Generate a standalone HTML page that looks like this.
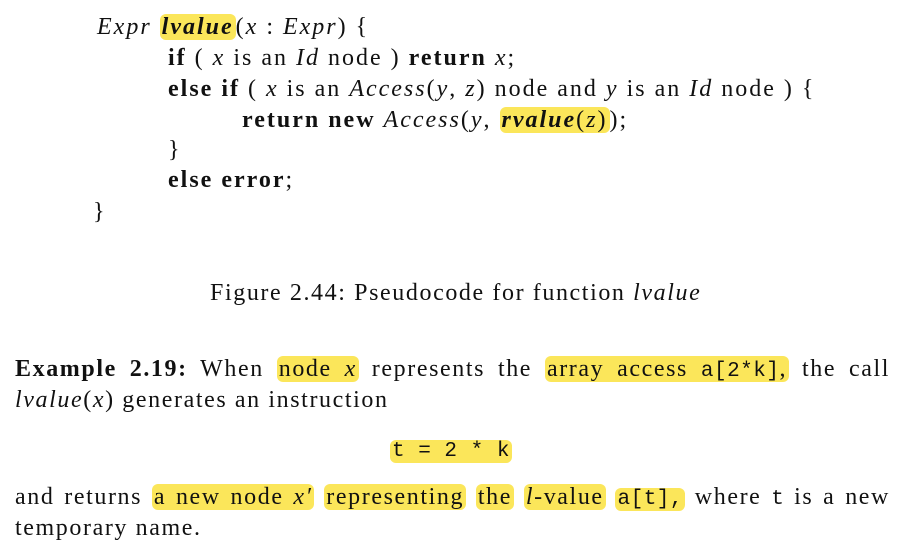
<!DOCTYPE html>
<html><head><meta charset="utf-8"><style>
body{margin:0;width:912px;height:542px;background:#fff;position:relative;overflow:hidden;font-family:"Liberation Serif","DejaVu Serif",serif;color:#111;font-size:24px;letter-spacing:1.6px}
.l{position:absolute;white-space:nowrap;line-height:30px;height:30px}
.c{letter-spacing:2px}
.h{background:#fbe65a;border-radius:6px;padding:0 2px}
.j{left:15px;width:875px;text-align:justify;text-align-last:justify}
.m{font-family:"Liberation Mono",monospace;font-size:21px;letter-spacing:0.5px}
b{font-weight:bold}
</style></head><body>
<div class="l c" style="left:97px;top:12px"><i>Expr</i> <i class="h"><b>lvalue</b></i>(<i>x</i> : <i>Expr</i>) {</div>
<div class="l c" style="left:168px;top:43px"><b>if</b> ( <i>x</i> is an <i>Id</i> node ) <b>return</b> <i>x</i>;</div>
<div class="l c" style="left:168px;top:74px"><b>else if</b> ( <i>x</i> is an <i>Access</i>(<i>y</i>, <i>z</i>) node and <i>y</i> is an <i>Id</i> node ) {</div>
<div class="l c" style="left:242px;top:105px"><b>return new</b> <i>Access</i>(<i>y</i>, <span class="h"><i><b>rvalue</b></i>(<i>z</i>)</span>);</div>
<div class="l" style="left:168px;top:135px">}</div>
<div class="l c" style="left:168px;top:165px"><b>else error</b>;</div>
<div class="l" style="left:93px;top:197px">}</div>
<div class="l" style="left:210px;top:278px">Figure 2.44: Pseudocode for function <i>lvalue</i></div>
<div class="l j" style="top:354px"><b>Example 2.19:</b> When <span class="h">node <i>x</i></span> represents the <span class="h">array access <span class="m">a[2*k]</span>,</span> the call</div>
<div class="l" style="left:15px;top:385px"><i>lvalue</i>(<i>x</i>) generates an instruction</div>
<div class="l" style="left:390px;top:434px"><span class="h m">t = 2 * k</span></div>
<div class="l j" style="top:482px">and returns <span class="h">a new node <i>x′</i></span> <span class="h">representing</span> <span class="h">the</span> <span class="h"><i>l</i>-value</span> <span class="h m">a[t],</span> where <span class="m">t</span> is a new</div>
<div class="l" style="left:15px;top:513px">temporary name.</div>
</body></html>
